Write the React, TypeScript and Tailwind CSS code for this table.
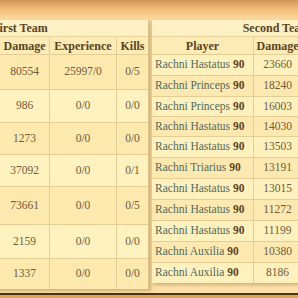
import React from "react";

const firstTeam = [
  { damage: "80554", exp: "25997/0", kills: "0/5", h: "h-[35px]" },
  { damage: "986", exp: "0/0", kills: "0/0", h: "h-[33px]" },
  { damage: "1273", exp: "0/0", kills: "0/0", h: "h-[32px]" },
  { damage: "37092", exp: "0/0", kills: "0/1", h: "h-[32px]" },
  { damage: "73661", exp: "0/0", kills: "0/5", h: "h-[38px]" },
  { damage: "2159", exp: "0/0", kills: "0/0", h: "h-[34px]" },
  { damage: "1337", exp: "0/0", kills: "0/0", h: "h-[30px]" },
];

const secondTeam = [
  { name: "Rachni Hastatus", damage: "23660", h: "h-[21px]" },
  { name: "Rachni Princeps", damage: "18240", h: "h-[21px]" },
  { name: "Rachni Princeps", damage: "16003", h: "h-[20px]" },
  { name: "Rachni Hastatus", damage: "14030", h: "h-[20px]" },
  { name: "Rachni Hastatus", damage: "13503", h: "h-[21px]" },
  { name: "Rachni Triarius", damage: "13191", h: "h-[21px]" },
  { name: "Rachni Hastatus", damage: "13015", h: "h-[21px]" },
  { name: "Rachni Hastatus", damage: "11272", h: "h-[21px]" },
  { name: "Rachni Hastatus", damage: "11199", h: "h-[21px]" },
  { name: "Rachni Auxilia", damage: "10380", h: "h-[21px]" },
  { name: "Rachni Auxilia", damage: "8186", h: "h-[20px]" },
];

export default function App() {
  return (
    <div className="w-[298px] h-[298px] overflow-hidden flex flex-col bg-[#fbe1a9] font-['Liberation_Serif',serif]">
      {/* top bar */}
      <div className="h-[20px] shrink-0 bg-gradient-to-b from-[#cf955a] via-[#f3be7a] to-[#fbdba3]" />

      <div className="flex-1 flex items-start gap-[2px] bg-gradient-to-b from-[#fce3ad] to-[#fbdfa6]">
        {/* First team */}
        <div className="-ml-[108px] w-[257px] shrink-0 bg-[#fdefbd] border-r border-[#dcc286] shadow-[2px_2px_3px_rgba(130,90,30,0.35)]">
          <div className="h-[17px] flex items-center justify-center bg-[#fdf1c4] border-b border-[#ead39b] text-[12px] font-bold text-[#5a4422] leading-none">
            First Team
          </div>
          <div className="h-[18px] flex text-[12px] font-bold text-[#5a4422] bg-[#fcebb4] border-b border-[#e6cd93]">
            <div className="w-[108px]" />
            <div className="w-[49px] flex items-center justify-center">Damage</div>
            <div className="w-[67px] flex items-center justify-center border-l border-[#e6cd93]">Experience</div>
            <div className="flex-1 flex items-center justify-center border-l border-[#e6cd93]">Kills</div>
          </div>
          {firstTeam.map((r, i) => (
            <div
              key={i}
              className={`${r.h} flex text-[11.5px] text-[#6f5b3b] border-b border-[#e6cd93] last:border-b-0 ${
                i % 2 === 0 ? "bg-[#fde8ae]" : "bg-[#fff2bf]"
              }`}
            >
              <div className="w-[108px]" />
              <div className="w-[49px] flex items-center justify-center">{r.damage}</div>
              <div className="w-[67px] flex items-center justify-center border-l border-[#e6cd93]">{r.exp}</div>
              <div className="flex-1 flex items-center justify-center border-l border-[#e6cd93]">{r.kills}</div>
            </div>
          ))}
        </div>

        {/* Second team */}
        <div className="w-[250px] shrink-0 bg-[#fdefbd] border-l border-[#e2c98c] shadow-[2px_2px_3px_rgba(130,90,30,0.35)]">
          <div className="h-[17px] flex items-center justify-center bg-[#fdf1c4] border-b border-[#ead39b] text-[12px] font-bold text-[#5a4422] leading-none">
            Second Team
          </div>
          <div className="h-[18px] flex text-[12px] font-bold text-[#5a4422] bg-[#fcebb4] border-b border-[#e6cd93]">
            <div className="w-[101px] flex items-center justify-center">Player</div>
            <div className="w-[48px] flex items-center justify-center border-l border-[#e6cd93]">Damage</div>
            <div className="flex-1 border-l border-[#e6cd93]" />
          </div>
          {secondTeam.map((r, i) => (
            <div
              key={i}
              className={`${r.h} flex border-b border-[#e6cd93] last:border-b-0 ${
                i % 2 === 0 ? "bg-[#fff1be]" : "bg-[#fde9b0]"
              }`}
            >
              <div className="w-[101px] flex items-center pl-[3px] text-[11.5px] text-[#4e6a5c] whitespace-nowrap">
                {r.name}&nbsp;<span className="font-bold text-[#5a4422]">90</span>
              </div>
              <div className="w-[48px] flex items-center justify-center border-l border-[#e6cd93] text-[11.5px] text-[#6f5b3b]">
                {r.damage}
              </div>
              <div className="flex-1 border-l border-[#e6cd93]" />
            </div>
          ))}
        </div>
      </div>

      {/* bottom bar */}
      <div className="h-[5px] shrink-0 border-t-2 border-[#4a3416] bg-[#d9a462]" />
    </div>
  );
}
